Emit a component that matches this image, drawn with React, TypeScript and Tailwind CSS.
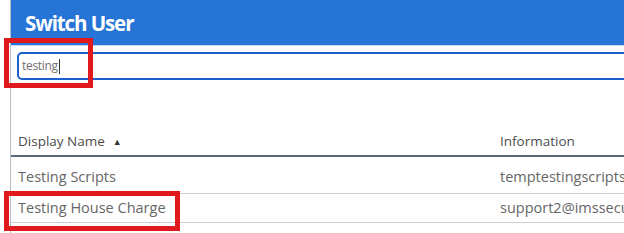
export default function App() {
  const rows = [
    { name: "Testing Scripts", info: "temptestingscripts", first: true },
    { name: "Testing House Charge", info: "support2@imssecu", first: false },
  ];
  return (
    <div className="relative h-[233px] w-[624px] overflow-hidden bg-white font-['Open_Sans',sans-serif]">
      <div className="ml-[10px] h-full border-l border-[#b9bcc2]">
        <div className="flex h-[45px] items-center bg-[#2675d6] pl-[14px] pt-[1px]">
          <h1 className="text-[20.5px] font-bold leading-none tracking-[-1.1px] text-white">Switch User</h1>
        </div>
        <div className="h-px bg-[#c9d8ee]" />
        <div className="pl-[6px] pt-[6px]">
          <div className="flex h-[28px] w-[700px] items-center rounded-[5px] border-2 border-[#1c5fcf] pl-[3px]">
            <span className="text-[12px] tracking-[-0.3px] text-[#707070]">testing</span>
            <span className="ml-px h-[15px] w-px bg-[#333]" />
          </div>
        </div>
        <table className="mt-[47px] w-[700px] table-fixed border-collapse text-left">
          <colgroup>
            <col className="w-[482px]" />
            <col className="w-[218px]" />
          </colgroup>
          <thead>
            <tr className="border-b-2 border-[#5b687a]">
              <th className="h-[29px] pl-[7px] align-middle text-[13.5px] font-medium text-[#4d4d4d]">
                Display Name<span className="ml-[8px] align-[1px] text-[9px] text-[#333]">▲</span>
              </th>
              <th className="pl-[7px] text-[13.5px] font-medium text-[#4d4d4d]">Information</th>
            </tr>
          </thead>
          <tbody>
            {rows.map((r) => (
              <tr key={r.name} className="border-b border-[#c8ced8]">
                <td className={`${r.first ? "h-[37px] pt-[5px]" : "h-[29px] pt-[1px]"} whitespace-nowrap pl-[7px] text-[14.5px] text-[#666]`}>
                  {r.name}
                </td>
                <td className={`${r.first ? "pt-[5px]" : "pt-[1px]"} whitespace-nowrap pl-[7px] text-[14.5px] text-[#666]`}>
                  {r.info}
                </td>
              </tr>
            ))}
          </tbody>
        </table>
      </div>
      <div className="absolute left-[4px] top-[38px] h-[50px] w-[89px] border-[5px] border-[#e0191e]" />
      <div className="absolute left-[4px] top-[191px] h-[40px] w-[176px] border-[5px] border-[#e0191e]" />
    </div>
  );
}
